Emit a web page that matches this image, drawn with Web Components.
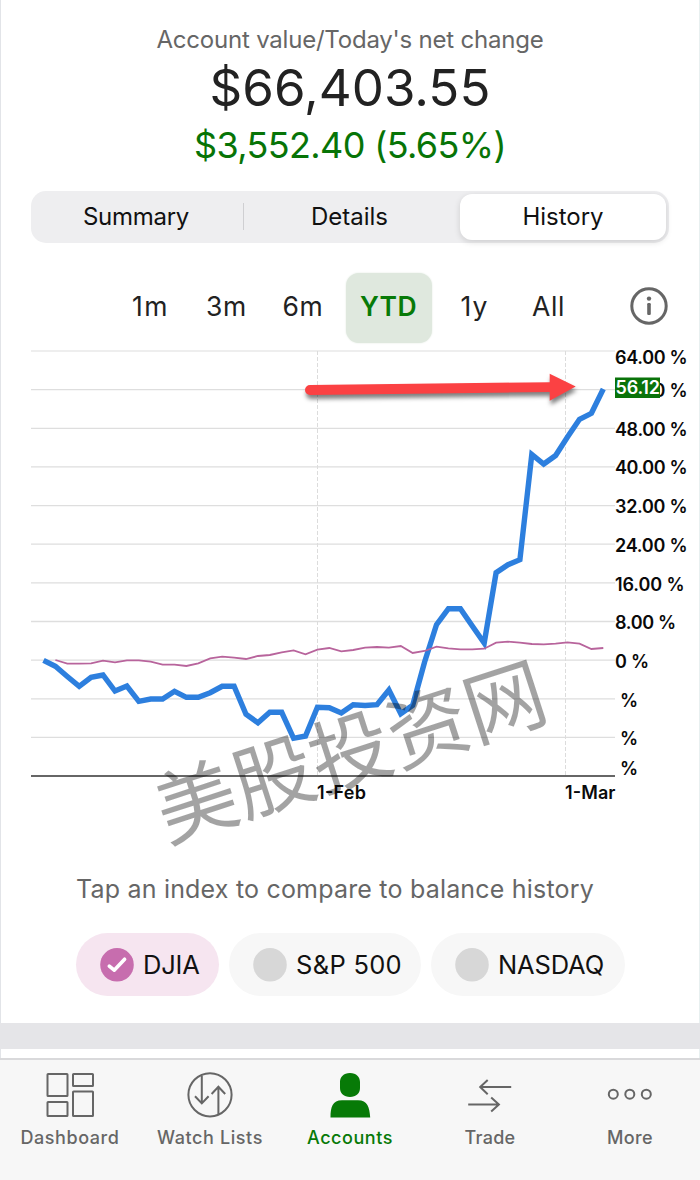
<!DOCTYPE html>
<html lang="en">
<head>
<meta charset="utf-8">
<title>Account history</title>
<style>
  body {
    background: #fff;
    font-family: Inter, "Liberation Sans", sans-serif;
    margin: 0;
  }
</style>
</head>
<body>
<account-page></account-page>

<script>
const define = (name, html, setup) => {
  const template = document.createElement('template')
  template.innerHTML = html

  window.customElements.define(name, class extends HTMLElement {
    constructor () {
      super()
      this.attachShadow({ mode: 'open' })
      this.shadowRoot.appendChild(template.content.cloneNode(true))
    }

    connectedCallback () {
      if (setup) setup(this, this.shadowRoot)
    }
  })
}

// a single line of text, tracked to the given width
define('fit-text', `
  <style>
    :host {
      display: block;
      white-space: nowrap;
    }

    span {
      display: inline-block;
    }
  </style>
  <span><slot></slot></span>
`, (host, root) => {
  const span = root.querySelector('span')
  const width = Number(host.getAttribute('width'))
  const natural = span.getBoundingClientRect().width
  const gaps = host.textContent.length
  span.style.letterSpacing = `${(width - natural) / gaps}px`
})

define('account-summary', `
  <style>
    :host {
      align-items: center;
      display: flex;
      flex-direction: column;
      height: 190.5px;
    }

    .label {
      color: #666;
      font-size: 24px;
      line-height: 30px;
      margin-top: 25px;
    }

    .value {
      color: #222;
      font-size: 51px;
      line-height: 60px;
      margin-top: 3px;
    }

    .change {
      color: #077407;
      font-size: 36px;
      line-height: 44px;
      margin-top: 5px;
    }
  </style>
  <fit-text class="label" width="387">Account value/Today's net change</fit-text>
  <fit-text class="value" width="281">$66,403.55</fit-text>
  <fit-text class="change" width="312">$3,552.40 (5.65%)</fit-text>
`)

define('segment-bar', `
  <style>
    :host {
      background: #eeeef0;
      border-radius: 15px;
      box-sizing: border-box;
      display: grid;
      grid-template-columns: 212px 1fr 206px;
      height: 52px;
      margin: 0 31px;
      padding: 3px 3px 3px 0;
    }
  </style>
  <slot></slot>
`)

define('segment-item', `
  <style>
    :host {
      align-items: center;
      border-radius: 12px;
      box-sizing: border-box;
      color: #111;
      display: flex;
      font-size: 24px;
      height: 46px;
      justify-content: center;
      line-height: 44px;
    }

    :host([divider])::after {
      background: #cfcfd2;
      content: '';
      height: 27px;
      margin-right: -1px;
      width: 1.5px;
    }

    :host([divider]) {
      justify-content: space-between;
      padding-left: 52px;
    }

    :host(:nth-child(2)) {
      padding-right: 4px;
    }

    :host([active]) {
      background: #fff;
      box-shadow: 0 2px 6px rgba(0, 0, 0, .14);
    }
  </style>
  <slot></slot>
`)

define('range-picker', `
  <style>
    :host {
      align-items: center;
      color: #222;
      display: grid;
      font-size: 26.5px;
      grid-template-columns: 77px 77px 76px 95px 77px 71px 1fr;
      height: 70px;
      justify-items: center;
      margin: 30.5px 31px 7px 111px;
    }

    svg {
      display: block;
      justify-self: end;
      margin-bottom: 4px;
    }

    fit-text {
      margin-bottom: 4px;
    }

    fit-text:first-of-type {
      margin-left: 2px;
    }

    .active {
      background: #dfe8de;
      border-radius: 13px;
      box-shadow: 0 0 2px #dfe8de;
      color: #077a07;
      display: grid;
      font-weight: 600;
      height: 70px;
      place-items: center;
      width: 86px;
    }

    .active fit-text {
      margin-left: 0;
    }
  </style>
  <fit-text width="37">1m</fit-text>
  <fit-text width="41">3m</fit-text>
  <fit-text width="41">6m</fit-text>
  <div class="active"><fit-text width="57">YTD</fit-text></div>
  <fit-text width="28">1y</fit-text>
  <fit-text width="33">All</fit-text>
  <svg width="40" height="40" viewBox="0 0 40 40">
    <circle cx="20" cy="20" r="17.2" fill="none" stroke="#666" stroke-width="3"/>
    <circle cx="20" cy="12.6" r="2.2" fill="#666"/>
    <rect x="18.2" y="17" width="3.6" height="12" rx="1.2" fill="#666"/>
  </svg>
`)

const TOP = 350
const STEP = 38.64
const FIRST_DAY = 43.5
const DAY_STEP = 11.91

const balance = [
  660.3, 666.3, 676.5, 686.3, 677.3, 675, 691, 686, 701.3, 699, 699, 691.3,
  697.3, 697.3, 692.7, 686.3, 686.3, 714.3, 722.7, 712.3, 712.3, 738.3, 736,
  707.3, 707.7, 713, 704.7, 705.5, 704.7, 690, 713.7, 705.3, 662, 624.7,
  608.7, 608.7, 626, 643, 572.7, 564.7, 559.7, 454.5, 464, 455.5, 437, 419.3,
  413.3, 389
]

const djia = [
  660, 663.7, 663.7, 663.3, 660.7, 662.3, 660.3, 660.3, 661.7, 664.7, 664.7,
  666, 663.3, 658.3, 656.7, 657.7, 659, 656, 655, 652.3, 650.3, 654.3, 649.7,
  648, 651.3, 650, 647.7, 647, 647.7, 646, 653, 651, 646.7, 648.3, 649.3,
  649.3, 648.7, 642.7, 641.7, 642.7, 644, 644.3, 643.7, 642.3, 643.7, 649, 648
]

// text, x, baseline, width
const ticks = [
  ['64.00 %', 615, 364, 72.5],
  ['56.00 %', 615, 397, 72.5],
  ['48.00 %', 615, 435.7, 72.5],
  ['40.00 %', 615, 474.3, 72.5],
  ['32.00 %', 615, 513, 72.5],
  ['24.00 %', 615, 551.7, 72.5],
  ['16.00 %', 615, 590.5, 69.5],
  ['8.00 %', 615, 629.3, 61],
  ['0 %', 615, 668, 34],
  ['%', 620, 706.7, 16.5],
  ['%', 620, 745.3, 16.5],
  ['%', 620, 774.7, 16.5],
  ['1-Feb', 317, 799, 49],
  ['1-Mar', 565, 799, 50.5]
]

const points = (values, from) => values
  .map((y, i) => `${(FIRST_DAY + (i + from) * DAY_STEP).toFixed(1)},${y}`)
  .join(' ')

define('balance-chart', `
  <style>
    :host {
      display: block;
      height: 522px;
    }

    svg {
      display: block;
      overflow: visible;
    }

    .grid {
      stroke: #dedede;
      stroke-width: 1.3;
    }

    .grid:first-child {
      stroke: #e8e8e8;
    }

    .month {
      stroke: #dcdcdc;
      stroke-dasharray: 4 2;
    }

    .axis {
      stroke: #666;
      stroke-width: 1.8;
    }

    .tick {
      fill: #0a0a0a;
      font-size: 18px;
      font-weight: 600;
    }

    .tag {
      fill: #fff;
      font-size: 18px;
      font-weight: 600;
    }

    .arrow {
      filter: drop-shadow(1px 4px 2px rgba(0, 0, 0, .5));
    }

    .mark {
      font-family: "Noto Sans CJK SC", sans-serif;
      font-size: 81px;
    }
  </style>
  <svg width="700" height="522" viewBox="0 ${TOP} 700 522">
    <g id="lines"></g>
    <polyline id="balance" fill="none" stroke="#2d7fde" stroke-width="5.4"/>
    <polyline id="djia" fill="none" stroke="#b8649c" stroke-width="1.8"/>
    <g id="ticks"></g>
    <rect x="615" y="377.5" width="45" height="20.5" fill="#0a730a"/>
    <text class="tag" x="615.5" y="394" textLength="44.5">56.12</text>
    <path class="arrow" d="M310 385 L549.7 382.2 V373.7 L575.7 386.5 L549.7 400.7 V392 L310 395 A5 5 0 0 1 310 385 Z" fill="#fb4143"/>
    <text class="mark" text-anchor="middle" transform="translate(350.5 752) rotate(-18)" y="29.5" fill="#000" fill-opacity=".36">美股投资网</text>
  </svg>
`, (host, root) => {
  const lines = root.querySelector('#lines')
  let markup = ''

  for (let i = 0; i < 11; i++) {
    const y = (351 + i * STEP).toFixed(1)
    markup += `<path class="grid" d="M31 ${y}H615"/>`
  }

  markup += '<path class="month" d="M317.5 351V776M565.5 351V776"/>'
  markup += '<path class="axis" d="M31 776H615"/>'
  lines.innerHTML = markup

  root.querySelector('#balance').setAttribute('points', points(balance, 0))
  root.querySelector('#djia').setAttribute('points', points(djia, 1))
  root.querySelector('#ticks').innerHTML = ticks.map(([text, x, y, width]) =>
    `<text class="tick" x="${x}" y="${y}" textLength="${width}">${text}</text>`
  ).join('')
})

define('index-chip', `
  <style>
    :host {
      align-items: center;
      background: #f7f7f7;
      border-radius: 32px;
      box-sizing: border-box;
      color: #111;
      display: flex;
      font-size: 25.5px;
      gap: 9px;
      height: 63px;
      padding-left: 24px;
    }

    :host([checked]) {
      background: #f6e5f0;
    }

    circle {
      fill: #d7d7d7;
    }

    path {
      display: none;
    }

    :host([checked]) circle {
      fill: #c76dae;
    }

    :host([checked]) path {
      display: block;
    }
  </style>
  <svg width="34" height="34" viewBox="0 0 34 34">
    <circle cx="17" cy="16.8" r="16.8"/>
    <path d="M9.3 18.1L14.2 22.2L24.6 11.2" fill="none" stroke="#fff" stroke-width="3.6" stroke-linecap="round" stroke-linejoin="round"/>
  </svg>
  <slot></slot>
`)

define('index-compare', `
  <style>
    :host {
      display: block;
      height: 151px;
    }

    .hint {
      color: #666;
      font-size: 25px;
      line-height: 34px;
      margin-left: 76px;
    }

    .chips {
      display: grid;
      gap: 10px;
      grid-template-columns: 143px 192px 194px;
      margin: 27px 0 0 76px;
    }
  </style>
  <fit-text class="hint" width="518">Tap an index to compare to balance history</fit-text>
  <div class="chips">
    <index-chip checked><fit-text width="56.5">DJIA</fit-text></index-chip>
    <index-chip><fit-text width="106">S&amp;P 500</fit-text></index-chip>
    <index-chip><fit-text width="106">NASDAQ</fit-text></index-chip>
  </div>
`)

define('tab-item', `
  <style>
    :host {
      align-items: center;
      color: #666;
      display: flex;
      flex-direction: column;
      font-size: 18px;
      font-weight: 500;
      line-height: 24px;
    }

    :host([active]) {
      color: #077a07;
    }

    ::slotted(svg) {
      display: block;
      height: 48px;
      margin: 11px 0 6.5px;
      width: 50px;
    }
  </style>
  <slot name="icon"></slot>
  <slot></slot>
`)

define('tab-bar', `
  <style>
    :host {
      background: #f7f7f7;
      border-top: 2px solid #d9d9db;
      box-sizing: border-box;
      display: grid;
      grid-template-columns: repeat(5, 140px);
      height: 122px;
    }

    svg {
      fill: none;
      stroke: currentColor;
      stroke-width: 2;
    }
  </style>
  <tab-item>
    <svg slot="icon" viewBox="0 0 50 48">
      <rect x="2.5" y="3" width="20" height="22" rx=".6"/>
      <rect x="28" y="3" width="20" height="12" rx=".6"/>
      <rect x="2.5" y="31" width="20" height="14" rx=".6"/>
      <rect x="28" y="20.5" width="20" height="24.5" rx=".6"/>
    </svg>
    <fit-text width="99">Dashboard</fit-text>
  </tab-item>
  <tab-item>
    <svg slot="icon" viewBox="0 0 50 48">
      <circle cx="25" cy="23.8" r="21.6"/>
      <path d="M16.8 4.5V32M10 25.2L16.8 32.4L23.6 25.2M33.4 43.5V16M26.6 23L33.4 15.8L40.2 23"/>
    </svg>
    <fit-text width="106">Watch Lists</fit-text>
  </tab-item>
  <tab-item active>
    <svg slot="icon" viewBox="0 0 50 48">
      <path fill="currentColor" stroke="none" d="M25 2C31.5 2 35 6 35 11V17C35 22.5 31 26 25 26S15 22.5 15 17V11C15 6 18.5 2 25 2ZM5.5 46.5C5.5 36 7.5 29.2 17 29.2H33C42.5 29.2 44.5 36 45.2 46.5Z"/>
    </svg>
    <fit-text width="86">Accounts</fit-text>
  </tab-item>
  <tab-item>
    <svg slot="icon" viewBox="0 0 50 48">
      <path d="M46.2 16H15.5M22.7 9L15.2 16L22.7 23.2M3.2 33.4H33.7M26.2 26.4L33.9 33.4L26.2 40.6"/>
    </svg>
    <fit-text width="51">Trade</fit-text>
  </tab-item>
  <tab-item>
    <svg slot="icon" viewBox="0 0 50 48">
      <circle cx="8.3" cy="23.2" r="4.5"/>
      <circle cx="24.8" cy="23.2" r="4.5"/>
      <circle cx="41.3" cy="23.2" r="4.5"/>
    </svg>
    <fit-text width="46">More</fit-text>
  </tab-item>
`)

define('account-page', `
  <style>
    :host {
      display: block;
      height: 1180px;
      overflow: hidden;
      width: 700px;
    }

    main,
    .next {
      box-shadow: inset 1px 0 #e2e4e8, inset -1px 0 #e8f0f0;
    }

    main {
      display: flow-root;
      height: 1023px;
    }

    .band {
      background: #e5e5e8;
      height: 26px;
    }

    .next {
      height: 9px;
    }
  </style>
  <main>
    <account-summary></account-summary>
    <segment-bar>
      <segment-item divider><fit-text width="106">Summary</fit-text></segment-item>
      <segment-item><fit-text width="77">Details</fit-text></segment-item>
      <segment-item active><fit-text width="81">History</fit-text></segment-item>
    </segment-bar>
    <range-picker></range-picker>
    <balance-chart></balance-chart>
    <index-compare></index-compare>
  </main>
  <div class="band"></div>
  <div class="next"></div>
  <tab-bar></tab-bar>
`)
</script>
</body>
</html>
